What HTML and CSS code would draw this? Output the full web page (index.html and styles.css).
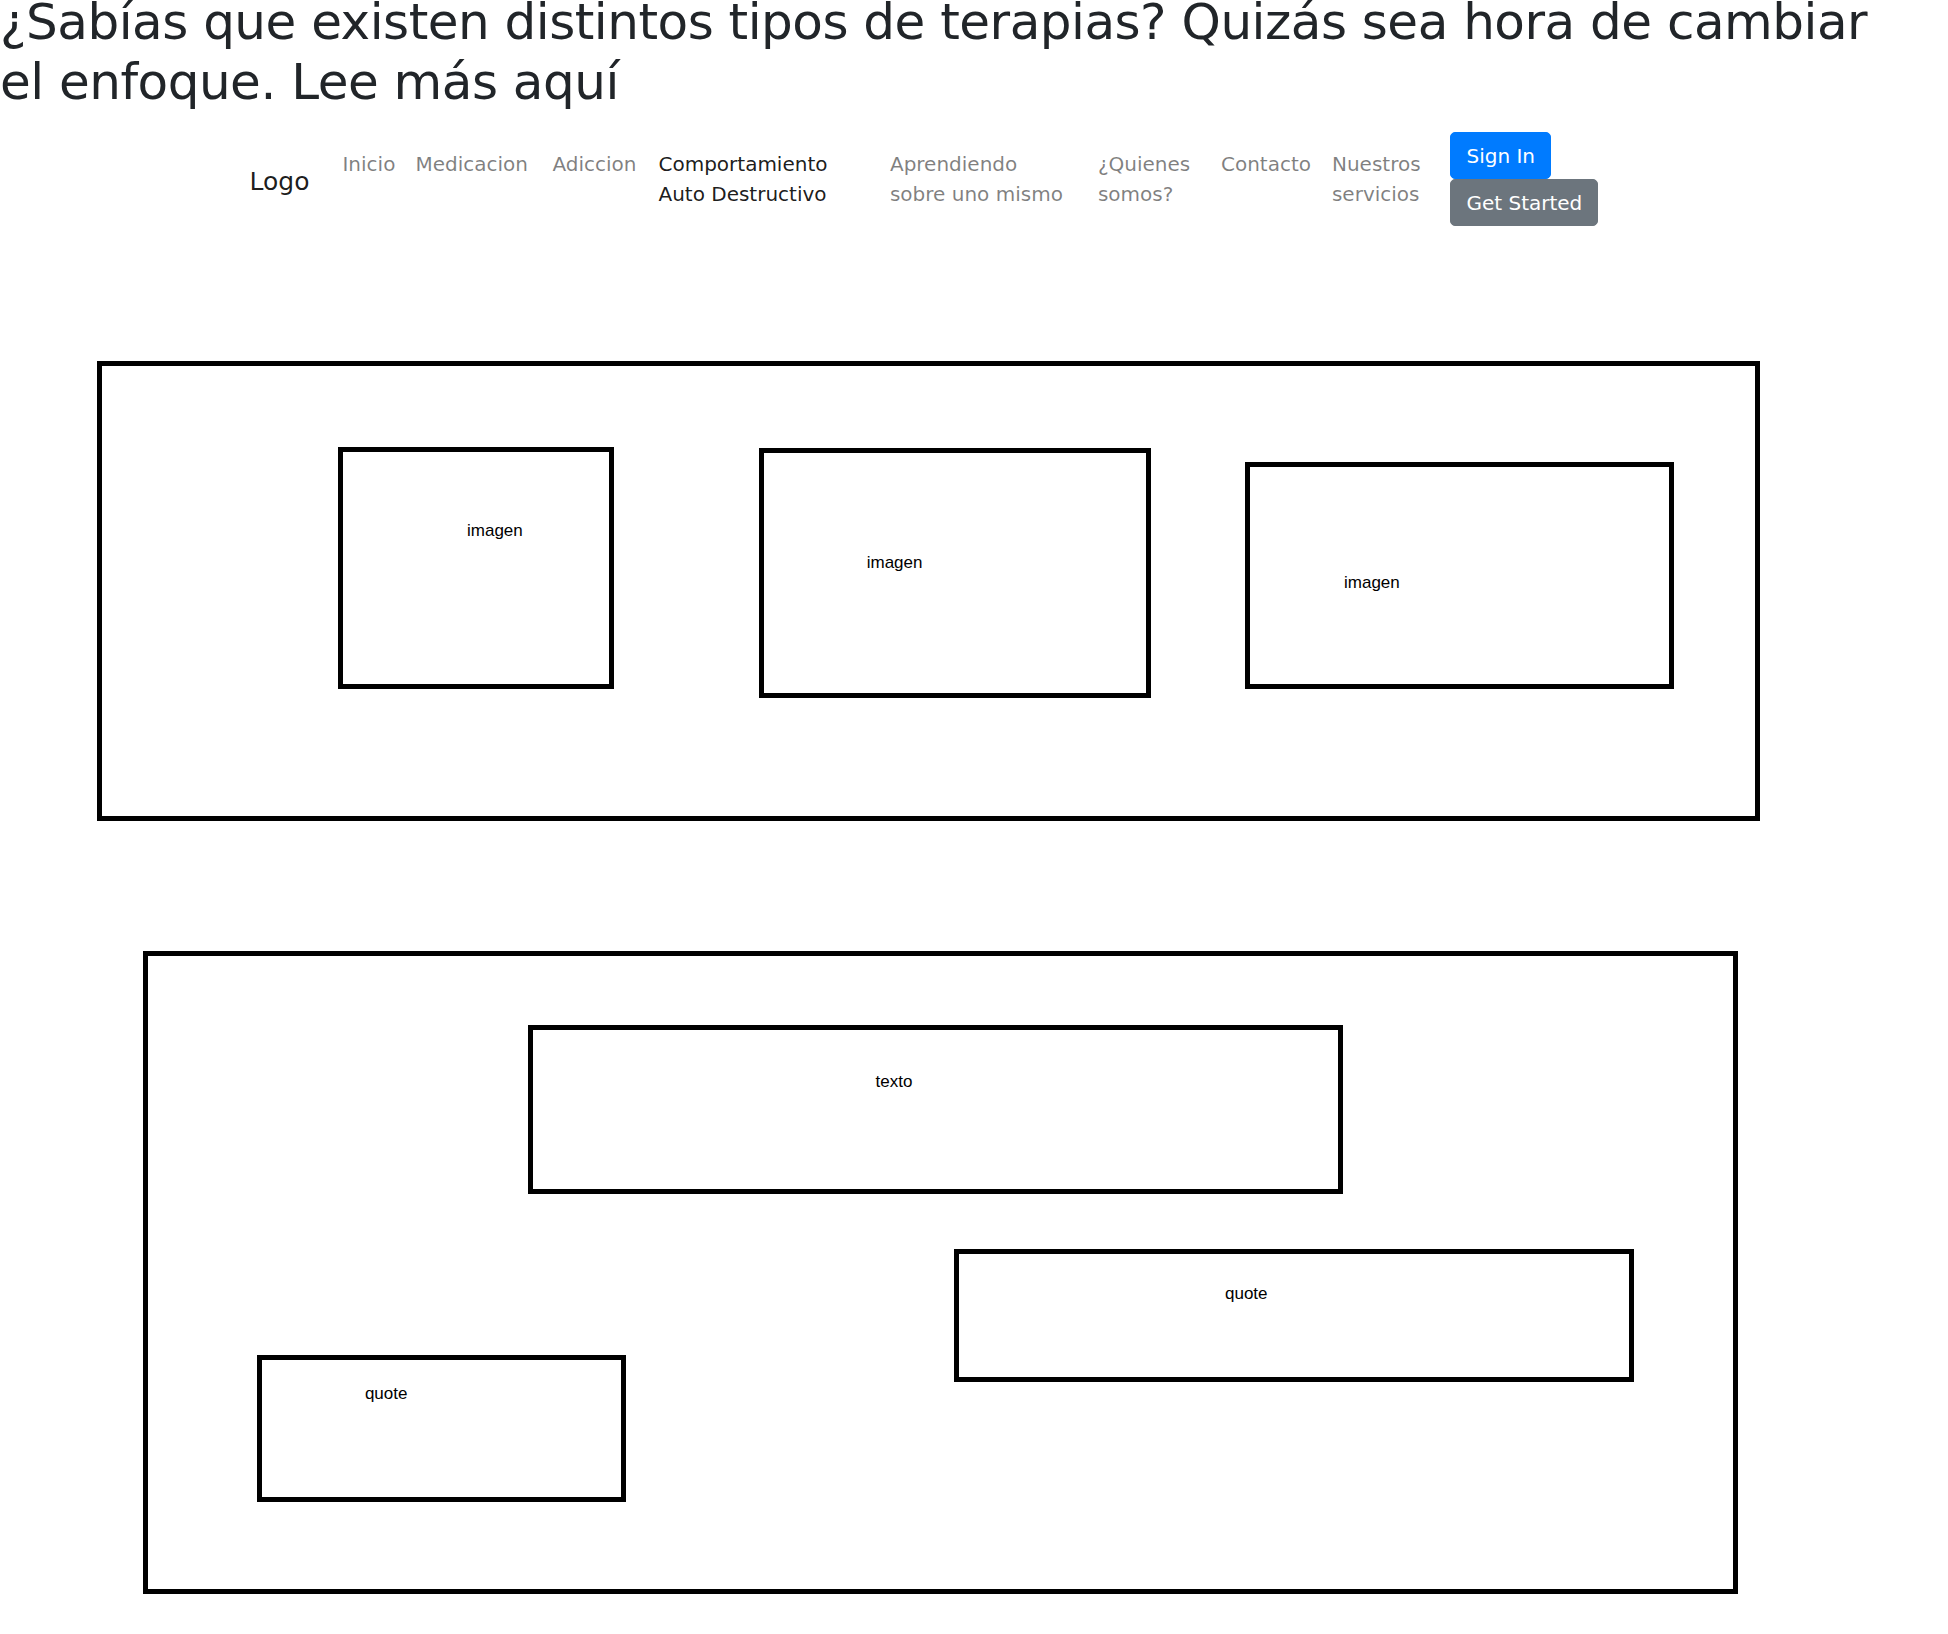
FILE: index.html
```html
<!DOCTYPE html>
<html lang="es">
<head>
<meta charset="utf-8">
<title>Terapias</title>
<link rel="stylesheet" href="styles.css">
</head>
<body>
<h1 class="headline">¿Sabías que existen distintos tipos de terapias? Quizás sea hora de cambiar el enfoque. Lee más aquí</h1>

<nav class="navbar">
  <a class="brand" href="#">Logo</a>
  <ul class="nav">
    <li class="nav-item item-inicio"><a class="nav-link" href="#">Inicio</a></li>
    <li class="nav-item item-medicacion"><a class="nav-link" href="#">Medicacion</a></li>
    <li class="nav-item item-adiccion"><a class="nav-link" href="#">Adiccion</a></li>
    <li class="nav-item item-comportamiento"><a class="nav-link active" href="#">Comportamiento Auto Destructivo</a></li>
    <li class="nav-item item-aprendiendo"><a class="nav-link" href="#">Aprendiendo<br>sobre uno mismo</a></li>
    <li class="nav-item item-quienes"><a class="nav-link" href="#">¿Quienes somos?</a></li>
    <li class="nav-item item-contacto"><a class="nav-link" href="#">Contacto</a></li>
    <li class="nav-item item-servicios"><a class="nav-link" href="#">Nuestros servicios</a></li>
  </ul>
  <div class="actions">
    <button class="btn btn-primary" type="button">Sign In</button>
    <button class="btn btn-secondary" type="button">Get Started</button>
  </div>
</nav>

<main class="sketch">
  <section class="frame frame-gallery">
    <div class="box box-img1"><span>imagen</span></div>
    <div class="box box-img2"><span>imagen</span></div>
    <div class="box box-img3"><span>imagen</span></div>
  </section>
  <section class="frame frame-text">
    <div class="box box-texto"><span>texto</span></div>
    <div class="box box-quote-right"><span>quote</span></div>
    <div class="box box-quote-left"><span>quote</span></div>
  </section>
</main>
</body>
</html>
```

FILE: styles.css
```css
html, body {
  margin: 0;
  padding: 0;
  background: #fff;
}

body {
  font-family: "DejaVu Sans", "Noto Sans", sans-serif;
  color: #212529;
  padding-bottom: 40px;
}

.headline {
  margin: -8px 0 10px 0;
  padding: 0 48px 0 0;
  font-size: 50px;
  line-height: 60px;
  font-weight: 400;
  letter-spacing: -0.5px;
  color: #212529;
}

/* ---------- navbar ---------- */
.navbar {
  display: flex;
  align-items: center;
  padding: 10px 0 10px 249.5px;
}

.brand {
  display: block;
  font-size: 25px;
  line-height: 37.5px;
  padding: 6.3px 0 1.5px 0;
  margin-right: 23px;
  color: rgba(0, 0, 0, 0.9);
  text-decoration: none;
  white-space: nowrap;
}

.nav {
  display: flex;
  align-items: flex-start;
  list-style: none;
  margin: 0;
  padding: 0;
}

.nav-item {
  flex: none;
  box-sizing: border-box;
}

.nav-link {
  display: block;
  padding: 10px;
  font-size: 20px;
  line-height: 30px;
  color: rgba(0, 0, 0, 0.5);
  text-decoration: none;
}

.nav-link.active {
  color: rgba(0, 0, 0, 0.9);
}

.item-inicio { width: 73px; }
.item-medicacion { width: 137px; }
.item-adiccion { width: 106px; }
.item-comportamiento { width: 231.5px; }
.item-aprendiendo { width: 208px; }
.item-quienes { width: 123px; }
.item-contacto { width: 111px; }
.item-servicios { width: 128.5px; }

.actions {
  display: flex;
  flex-direction: column;
  align-items: flex-start;
}

.btn {
  font-family: inherit;
  font-size: 20px;
  line-height: 30px;
  padding: 7.5px 15px;
  border: 1px solid transparent;
  border-radius: 5px;
  color: #fff;
  cursor: pointer;
}

.btn-primary {
  background: #007bff;
  border-color: #007bff;
}

.btn-secondary {
  background: #6c757d;
  border-color: #6c757d;
}

/* ---------- wireframe sketch ---------- */
.frame {
  position: relative;
  box-sizing: border-box;
  border: 5px solid #000;
}

.frame-gallery {
  margin: 125px 0 0 97px;
  width: 1663px;
  height: 460px;
}

.frame-text {
  margin: 130px 0 0 142.5px;
  width: 1595px;
  height: 643px;
}

.box {
  position: absolute;
  box-sizing: border-box;
  border: 5px solid #000;
  font-family: "Liberation Sans", Arial, sans-serif;
  font-size: 17px;
  line-height: 20px;
  color: #000;
}

.box-img1 {
  left: 236px;
  top: 81px;
  width: 276px;
  height: 242px;
  padding: 69px 0 0 124px;
}

.box-img2 {
  left: 657px;
  top: 82px;
  width: 392px;
  height: 250px;
  padding: 100px 0 0 102.7px;
}

.box-img3 {
  left: 1143.4px;
  top: 96px;
  width: 428.5px;
  height: 226.5px;
  padding: 105.5px 0 0 93.6px;
}

.box-texto {
  left: 380px;
  top: 69px;
  width: 815px;
  height: 169px;
  padding: 41.5px 0 0 343px;
}

.box-quote-right {
  left: 806.5px;
  top: 293px;
  width: 680px;
  height: 133px;
  padding: 29.5px 0 0 266px;
}

.box-quote-left {
  left: 109px;
  top: 399.3px;
  width: 369px;
  height: 146.7px;
  padding: 23.3px 0 0 103.4px;
}
```
